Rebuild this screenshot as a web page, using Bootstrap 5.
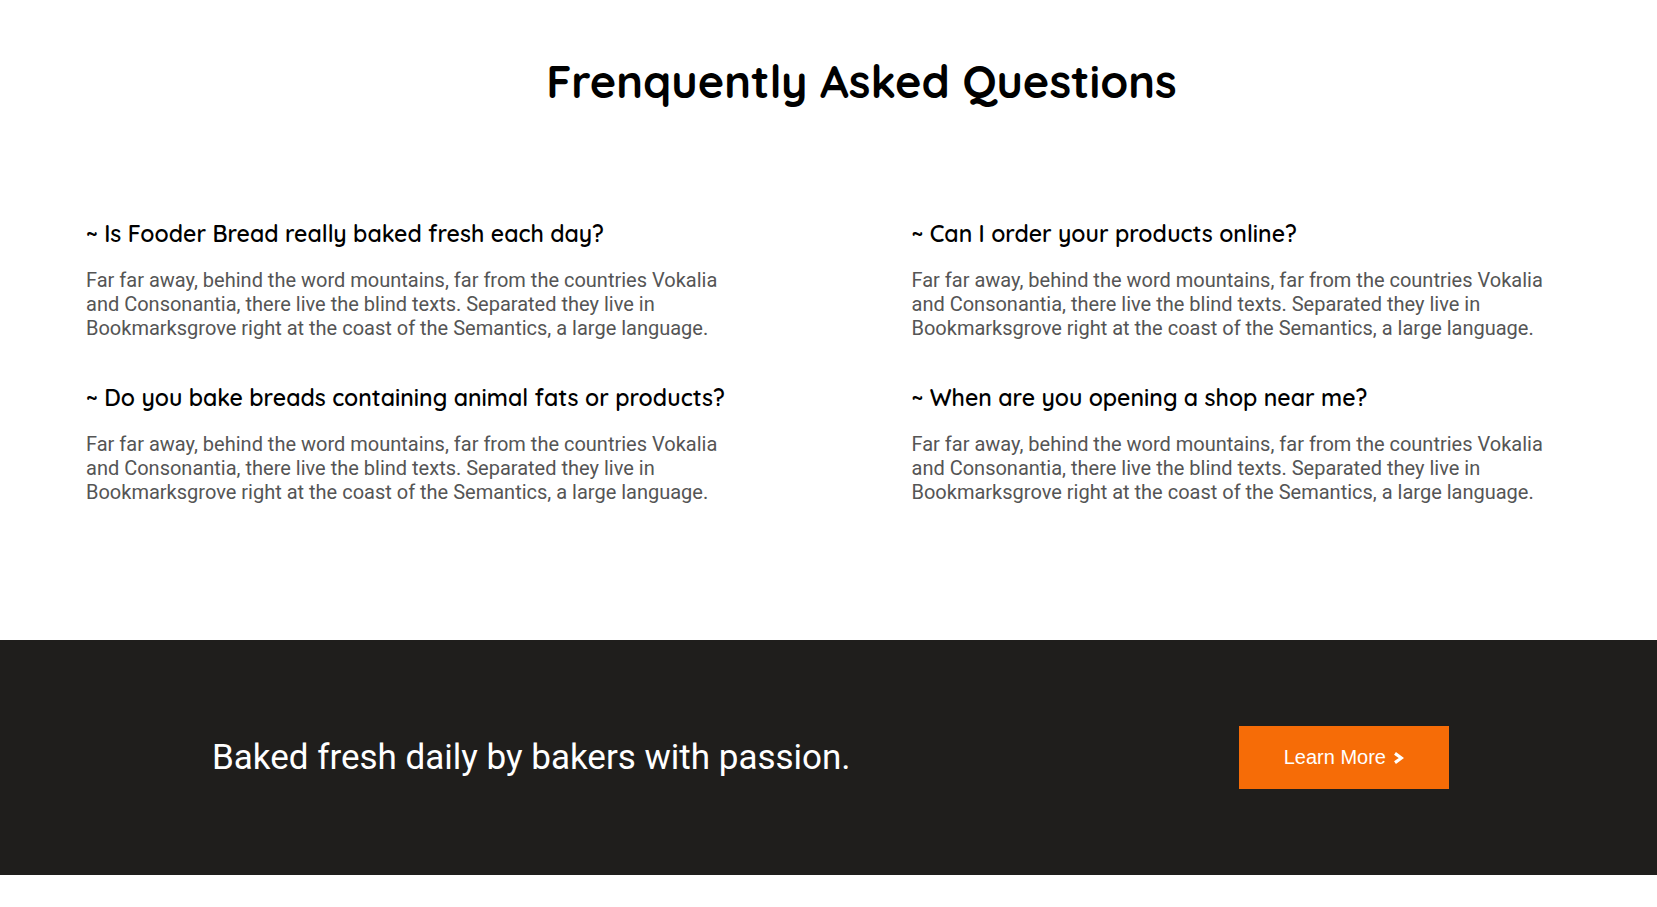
<!DOCTYPE html>
<html lang="en">
<head>
<meta charset="utf-8">
<meta name="viewport" content="width=device-width, initial-scale=1">
<title>Frenquently Asked Questions</title>
<link href="https://cdn.jsdelivr.net/npm/bootstrap@5.3.0/dist/css/bootstrap.min.css" rel="stylesheet">
<style>
  body { font-family: Roboto, sans-serif; font-size: 20px; line-height: 24px; }
  h1, h2 { font-family: Quicksand, Lato, sans-serif; color: #000; }
  .faq { padding: 53px 86px 136px; }
  .faq-title { font-size: 45px; font-weight: 700; line-height: 56px; padding-left: 66px; margin-bottom: 109px; }
  .faq-list { display: grid; grid-template-columns: 1fr 1fr; column-gap: 166px; row-gap: 42px; }
  .faq-list h2 { font-size: 23px; font-weight: 600; line-height: 32px; margin-bottom: 18px; }
  .faq-list p { color: #555; }
  .cta { background: #1f1e1c; padding: 86px 208px; }
  .cta-text { font-size: 35px; line-height: 44px; }
  .cta-btn { background: #f66c07; color: #fff; border: 0; border-radius: 0; padding: 19px 45px; font: 20px/25px "Liberation Sans", Arial, sans-serif; }
  .cta-btn:hover { background: #dd5f02; color: #fff; }
  @media (max-width: 991px) {
    .faq { padding: 48px 24px; }
    .faq-title { padding-left: 0; margin-bottom: 48px; }
    .faq-list { grid-template-columns: 1fr; }
    .cta { padding: 48px 24px; }
  }
</style>
</head>
<body>
<main>
  <section class="faq">
    <h1 class="faq-title text-center">Frenquently Asked Questions</h1>
    <div class="faq-list">
      <article>
        <h2>~ Is Fooder Bread really baked fresh each day?</h2>
        <p class="mb-0">Far far away, behind the word mountains, far from the countries Vokalia and Consonantia, there live the blind texts. Separated they live in Bookmarksgrove right at the coast of the Semantics, a large language.</p>
      </article>
      <article>
        <h2>~ Can I order your products online?</h2>
        <p class="mb-0">Far far away, behind the word mountains, far from the countries Vokalia and Consonantia, there live the blind texts. Separated they live in Bookmarksgrove right at the coast of the Semantics, a large language.</p>
      </article>
      <article>
        <h2>~ Do you bake breads containing animal fats or products?</h2>
        <p class="mb-0">Far far away, behind the word mountains, far from the countries Vokalia and Consonantia, there live the blind texts. Separated they live in Bookmarksgrove right at the coast of the Semantics, a large language.</p>
      </article>
      <article>
        <h2>~ When are you opening a shop near me?</h2>
        <p class="mb-0">Far far away, behind the word mountains, far from the countries Vokalia and Consonantia, there live the blind texts. Separated they live in Bookmarksgrove right at the coast of the Semantics, a large language.</p>
      </article>
    </div>
  </section>
  <section class="cta d-flex flex-wrap justify-content-between align-items-center gap-4">
    <p class="cta-text text-white mb-0 ps-1">Baked fresh daily by bakers with passion.</p>
    <button type="button" class="btn cta-btn d-inline-flex align-items-center gap-2">Learn More
      <svg width="10" height="12" viewBox="0 0 10 12" fill="none" stroke="#fff" stroke-width="3.2" aria-hidden="true"><path d="M1 1.4 7.4 6 1 10.6"/></svg>
    </button>
  </section>
</main>
<script src="https://cdn.jsdelivr.net/npm/bootstrap@5.3.0/dist/js/bootstrap.bundle.min.js"></script>
</body>
</html>
